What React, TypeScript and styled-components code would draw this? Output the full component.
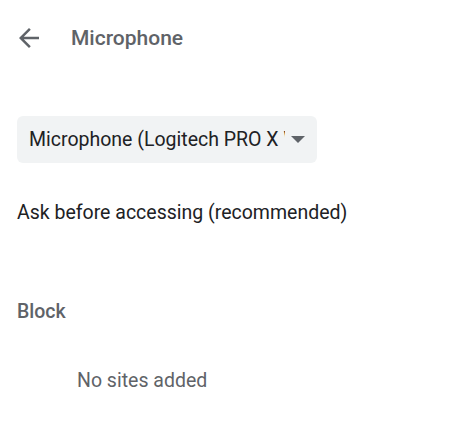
import React from "react";
import styled, { createGlobalStyle } from "styled-components";

const Global = createGlobalStyle`
  html, body { margin: 0; padding: 0; background: #ffffff; }
  body { font-family: Roboto, "Liberation Sans", sans-serif; -webkit-font-smoothing: antialiased; }
`;

const Page = styled.div`
  width: 450px;
  height: 446px;
  display: flex;
  flex-direction: column;
  overflow: hidden;
`;

const Header = styled.div`
  display: flex;
  align-items: center;
  height: 76px;
  padding-left: 9px;
`;

const BackButton = styled.button`
  width: 40px;
  height: 40px;
  border: none;
  background: none;
  padding: 0;
  display: flex;
  align-items: center;
  justify-content: center;
  color: #5f6368;
`;

const Title = styled.h1`
  margin: 0 0 0 22px;
  font-size: 21px;
  font-weight: 500;
  color: #5f6368;
`;

const Body = styled.div`
  display: flex;
  flex-direction: column;
  padding: 40px 17px 0;
`;

const Select = styled.div`
  width: 300px;
  height: 47px;
  box-sizing: border-box;
  background: #f1f3f4;
  border-radius: 6px;
  display: flex;
  align-items: center;
  padding: 0 12px 0 12px;
  gap: 6px;
`;

const SelectText = styled.span`
  flex: 1;
  white-space: nowrap;
  overflow: hidden;
  text-overflow: clip;
  font-size: 19.5px;
  color: #202124;
`;

const Row = styled.div<{ $muted?: boolean; $indent?: number; $weight?: number }>`
  font-size: 19.5px;
  color: ${(p) => (p.$muted ? "#5f6368" : "#202124")};
  font-weight: ${(p) => p.$weight ?? 400};
  padding-left: ${(p) => p.$indent ?? 0}px;
`;

const Spacer = styled.div<{ $h: number }>`
  height: ${(p) => p.$h}px;
`;

export default function App() {
  return (
    <Page>
      <Global />
      <Header>
        <BackButton aria-label="Back">
          <svg width="30" height="30" viewBox="0 0 24 24" fill="currentColor">
            <path d="M20 11H7.83l5.59-5.59L12 4l-8 8 8 8 1.41-1.41L7.83 13H20v-2z" />
          </svg>
        </BackButton>
        <Title>Microphone</Title>
      </Header>
      <Body>
        <Select>
          <SelectText>Microphone (Logitech PRO X Wireless Gaming Headset)</SelectText>
          <svg width="14" height="8" viewBox="0 0 14 8">
            <path d="M0 0h14L7 7z" fill="#5f6368" />
          </svg>
        </Select>
        <Spacer $h={38} />
        <Row>Ask before accessing (recommended)</Row>
        <Spacer $h={76} />
        <Row $muted $weight={500}>Block</Row>
        <Spacer $h={46} />
        <Row $muted $indent={60}>No sites added</Row>
      </Body>
    </Page>
  );
}
